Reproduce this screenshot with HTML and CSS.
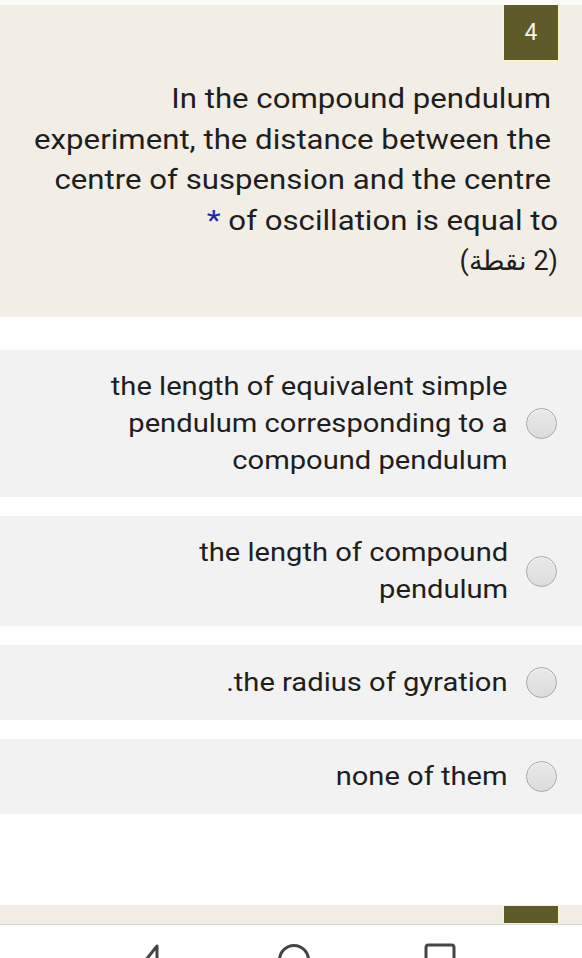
FILE: index.html
```html
<!DOCTYPE html>
<html>
<head>
<meta charset="utf-8">
<link rel="stylesheet" href="styles.css">
</head>
<body>
<div class="page">
  <div class="top-gap"></div>
  <section class="question">
    <div class="badge-row"><div class="badge">4</div></div>
    <div class="q-text" dir="rtl">
      <div class="q-a">In the compound pendulum<br>experiment, the distance between the<br>centre of suspension and the centre</div>
      <div class="q-b">of oscillation is equal to <span class="star">*</span></div>
      <div class="q-c">(2 نقطة)</div>
    </div>
  </section>

  <div class="options">
    <div class="option" dir="rtl">
      <span class="radio"></span>
      <span class="label">the length of equivalent simple<br>pendulum corresponding to a<br>compound pendulum</span>
    </div>
    <div class="option" dir="rtl">
      <span class="radio"></span>
      <span class="label">the length of compound<br>pendulum</span>
    </div>
    <div class="option" dir="rtl">
      <span class="radio"></span>
      <span class="label">the radius of gyration.</span>
    </div>
    <div class="option" dir="rtl">
      <span class="radio"></span>
      <span class="label">none of them</span>
    </div>
  </div>

  <div class="next-strip"><div class="next-badge"></div></div>

  <nav class="navbar">
    <svg class="nav-icon" width="34" height="34" viewBox="0 0 34 34"><path d="M26 3 L26 33 L2 33 Z" fill="none" stroke="#454545" stroke-width="3" stroke-linejoin="round"/></svg>
    <svg class="nav-icon" width="34" height="34" viewBox="0 0 34 34"><circle cx="17" cy="17" r="14.5" fill="none" stroke="#454545" stroke-width="3"/></svg>
    <svg class="nav-icon" width="34" height="34" viewBox="0 0 34 34"><rect x="3" y="2" width="28" height="28" rx="2.5" fill="none" stroke="#454545" stroke-width="3"/></svg>
  </nav>
</div>
</body>
</html>
```
FILE: styles.css
```css
html, body {
  margin: 0;
  padding: 0;
  background: #ffffff;
  overflow: hidden;
}
.page {
  width: 582px;
  height: 958px;
  overflow: hidden;
  font-family: Roboto, "Noto Sans", "Noto Sans CJK SC", sans-serif;
  color: #1e1e1e;
}
.top-gap {
  height: 5px;
  background: #fbfbf8;
}
.question {
  background: #f2eee6;
  height: 312px;
  box-sizing: border-box;
}
.badge-row {
  display: flex;
  justify-content: flex-end;
  padding-right: 23px;
}
.badge {
  width: 56px;
  height: 56px;
  box-sizing: border-box;
  background: #5e5a2a;
  border: 1.5px solid #fff6bd;
  border-top: none;
  color: #f4f2e6;
  font-size: 23px;
  display: flex;
  align-items: center;
  justify-content: center;
}
.q-text {
  margin-top: 18px;
  font-size: 27px;
  line-height: 40.6px;
  text-align: right;
}
.q-a,
.q-b {
  transform: scaleX(1.155);
  transform-origin: right center;
}
.q-a {
  margin-right: 31px;
}
.q-b,
.q-c {
  margin-right: 24px;
}
.star {
  color: #1b2aa6;
  font-size: 28px;
}
.options {
  margin-top: 33px;
  display: flex;
  flex-direction: column;
  gap: 19px;
}
.option {
  background: #f2f2f2;
  display: flex;
  align-items: center;
  padding: 18px 25px 18px 0;
  gap: 18px;
  min-height: 75px;
  box-sizing: border-box;
}
.label {
  font-size: 25px;
  line-height: 37px;
  text-align: right;
  transform: scaleX(1.165);
  transform-origin: right center;
}
.radio {
  flex: none;
  width: 31px;
  height: 31px;
  box-sizing: border-box;
  border-radius: 50%;
  border: 1.5px solid #a9a9a9;
  background: linear-gradient(#e9e9e9, #dcdcdc);
  box-shadow: inset 0 1px 1px #f8f8f8;
}
.next-strip {
  margin-top: 91px;
  height: 19px;
  background: #f1ede5;
  border-bottom: 1.5px solid #d7d7d3;
  display: flex;
  justify-content: flex-end;
  padding-right: 23px;
}
.next-badge {
  width: 56px;
  height: 18px;
  box-sizing: border-box;
  background: #5e5a2a;
  border: 1.5px solid #fff6bd;
  border-bottom: none;
}
.navbar {
  height: 40px;
  background: #ffffff;
  display: flex;
  padding-top: 18px;
}
.nav-icon {
  flex: none;
  display: block;
}
.nav-icon:nth-child(1) { margin-left: 131px; }
.nav-icon:nth-child(2) { margin-left: 112px; }
.nav-icon:nth-child(3) { margin-left: 112px; }
```
